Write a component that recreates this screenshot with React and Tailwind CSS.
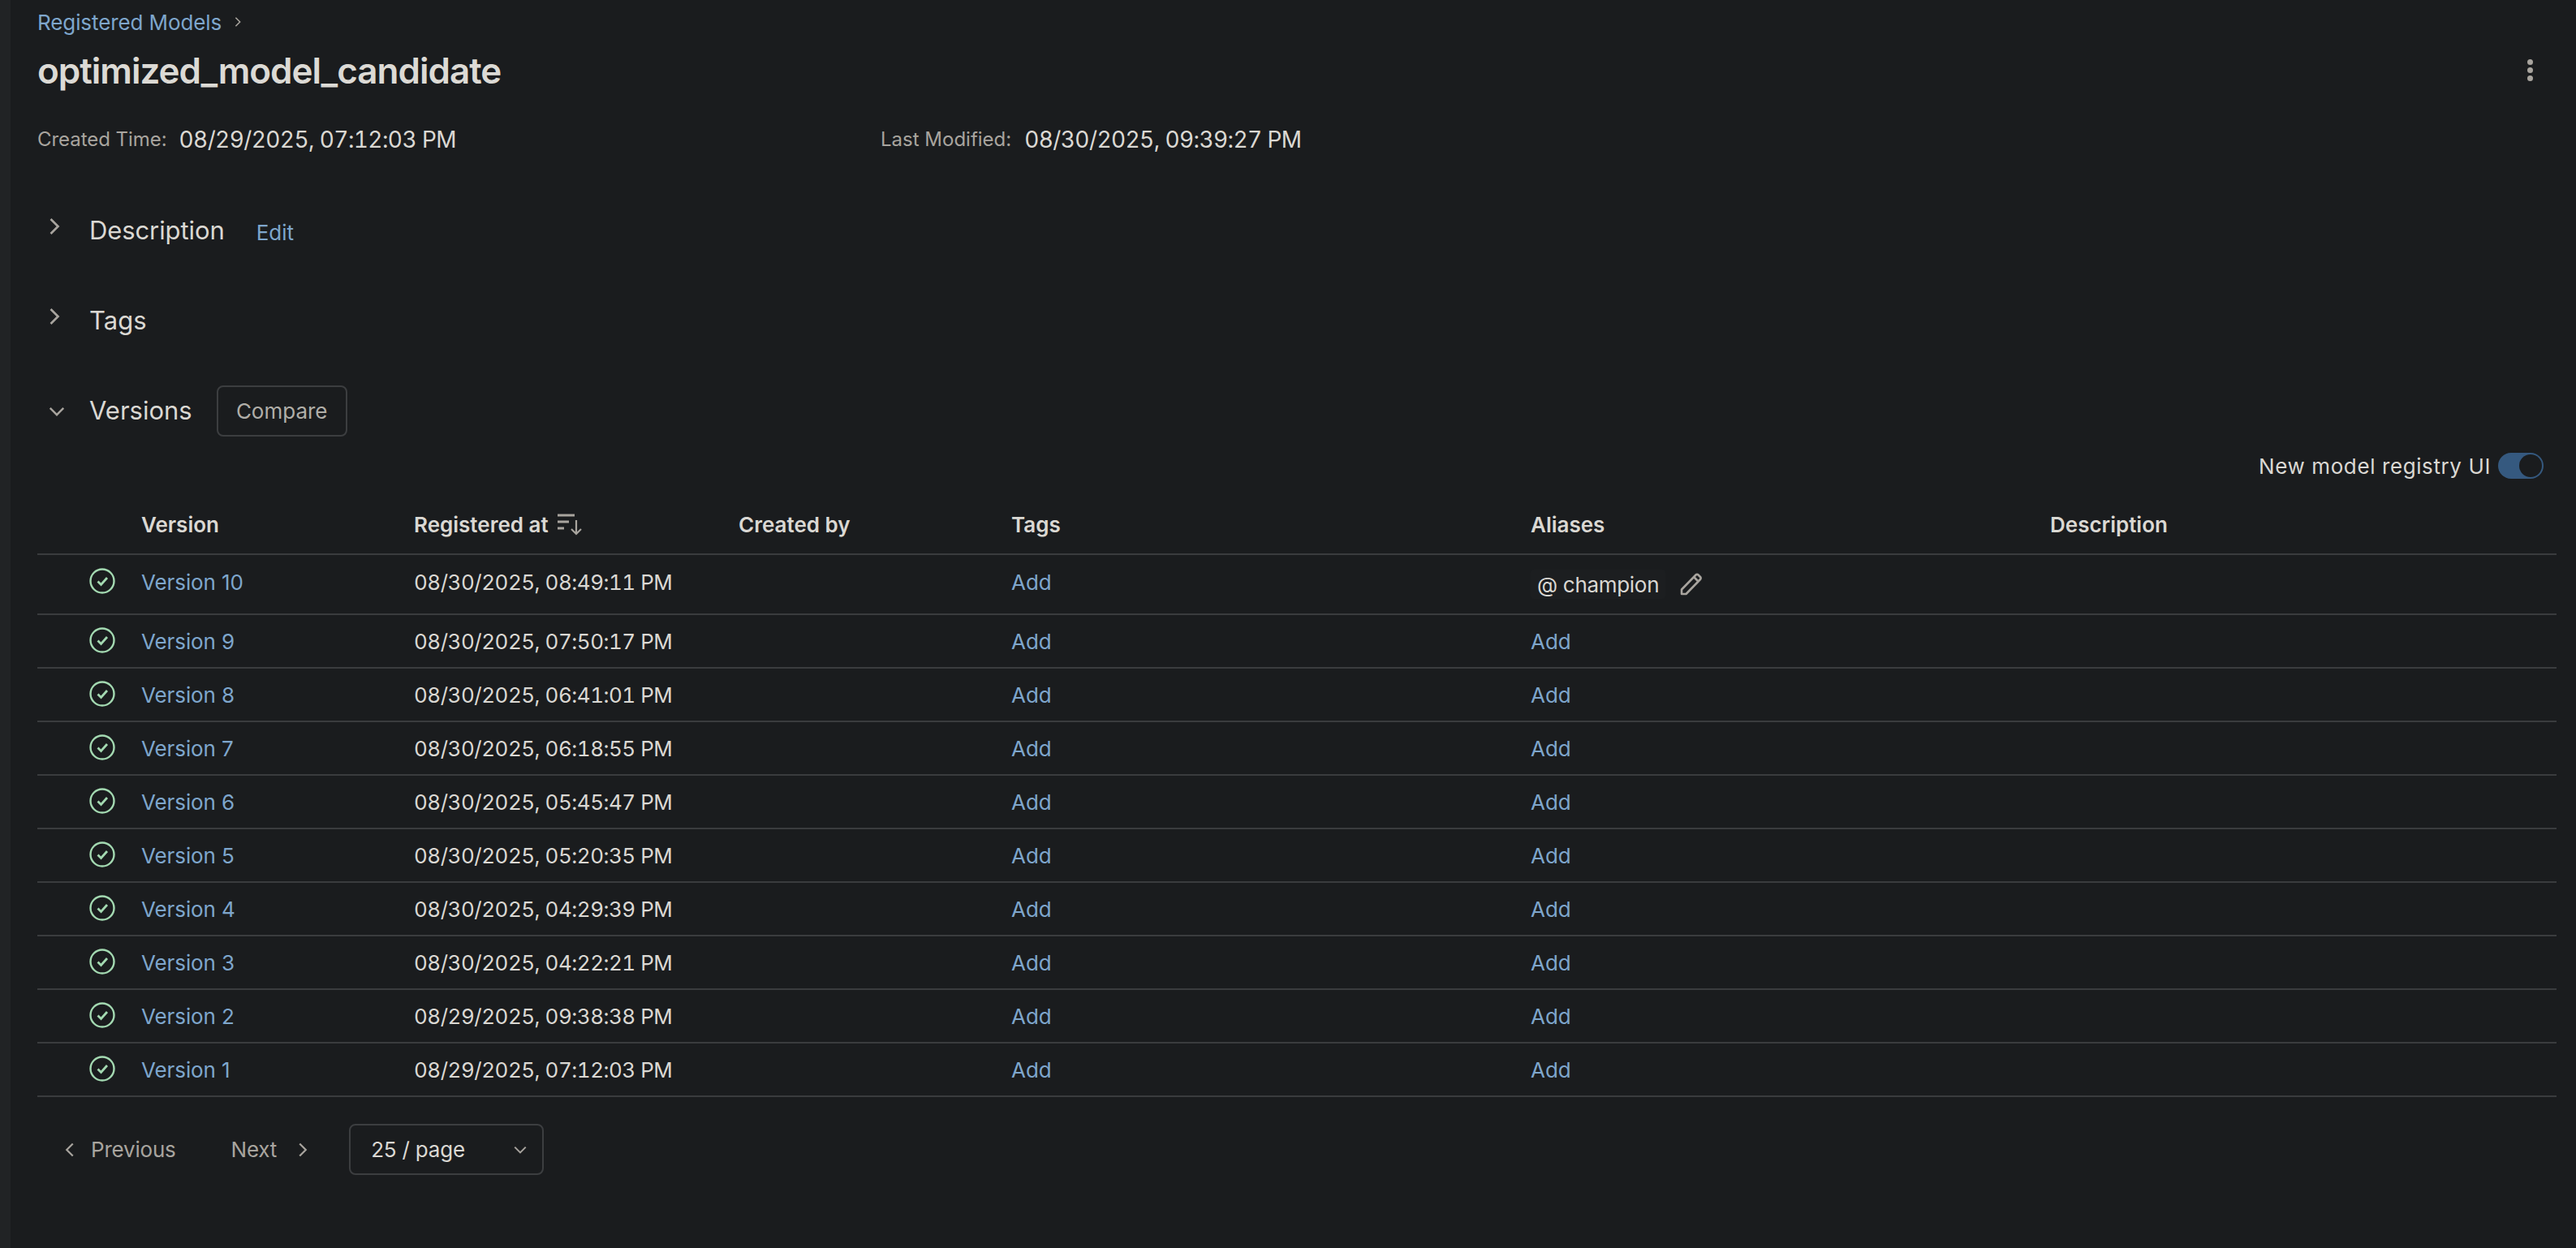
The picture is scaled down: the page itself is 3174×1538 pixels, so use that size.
import React from 'react'

const versions = [
  { name: 'Version 10', at: '08/30/2025, 08:49:11 PM', alias: 'champion' },
  { name: 'Version 9', at: '08/30/2025, 07:50:17 PM' },
  { name: 'Version 8', at: '08/30/2025, 06:41:01 PM' },
  { name: 'Version 7', at: '08/30/2025, 06:18:55 PM' },
  { name: 'Version 6', at: '08/30/2025, 05:45:47 PM' },
  { name: 'Version 5', at: '08/30/2025, 05:20:35 PM' },
  { name: 'Version 4', at: '08/30/2025, 04:29:39 PM' },
  { name: 'Version 3', at: '08/30/2025, 04:22:21 PM' },
  { name: 'Version 2', at: '08/29/2025, 09:38:38 PM' },
  { name: 'Version 1', at: '08/29/2025, 07:12:03 PM' },
]

const cols = 'grid grid-cols-[128px_336px_400px_336px_640px_640px_1fr]'

function Chevron({ dir = 'right', className = '' }) {
  const d = {
    right: 'M5 2l6 6-6 6',
    left: 'M11 2L5 8l6 6',
    down: 'M2 5l6 6 6-6',
  }[dir]
  return (
    <svg viewBox="0 0 16 16" fill="none" stroke="currentColor" strokeWidth="1.8" className={className}>
      <path d={d} />
    </svg>
  )
}

function StatusIcon() {
  return (
    <svg viewBox="0 0 32 32" fill="none" stroke="#a3d9b1" strokeWidth="2.4" className="w-[32px] h-[32px] shrink-0">
      <circle cx="16" cy="16" r="14.5" />
      <path d="M10.5 16.5l4 4 7.5-8.500" strokeWidth="2.8" />
    </svg>
  )
}

function SortIcon() {
  return (
    <svg viewBox="0 0 32 28" fill="none" stroke="#a8a49e" strokeWidth="3" className="w-[32px] h-[28px]">
      <path d="M1 3h21M1 11h14M1 19h8" />
      <path d="M24 9v17M18 20l6 6 6-6" strokeWidth="2.2" />
    </svg>
  )
}

function PencilIcon() {
  return (
    <svg viewBox="0 0 30 30" fill="none" stroke="#a8a49e" strokeWidth="2.6" strokeLinejoin="round" className="w-[30px] h-[30px]">
      <path d="M3 27v-5.500L20.500 3.500a2.100 2.100 0 0 1 3 0l2.500 2.500a2.100 2.100 0 0 1 0 3L8.500 27z" />
      <path d="M18 6l6 6" />
    </svg>
  )
}

export default function App() {
  return (
    <div className="flex min-h-screen h-[1538px] overflow-hidden bg-[#1a1c1e] text-[26px] text-[#dad8d3] font-['Inter','Liberation_Sans',sans-serif]">
      <div className="w-[13px] shrink-0 bg-[#212325]" />

      <main className="flex-1 min-w-0 pl-[33px] pr-[24px]">
        <div className="h-[54px] flex items-center text-[#7ea6cc] tracking-[-0.1px]">
          Registered Models
          <Chevron className="w-[14px] h-[14px] ml-[13px] text-[#a8a49e]" />
        </div>

        <div className="h-[66px] flex items-center justify-between">
          <h1 className="text-[44px] font-semibold tracking-[-1px] text-[#dcdad5]">optimized_model_candidate</h1>
          <div className="flex flex-col gap-[3px] mr-[29px] -mt-[2px]">
            <span className="w-[7px] h-[7px] rounded-full bg-[#a8a49e]" />
            <span className="w-[7px] h-[7px] rounded-full bg-[#a8a49e]" />
            <span className="w-[7px] h-[7px] rounded-full bg-[#a8a49e]" />
          </div>
        </div>

        <div className="mt-[20px] h-[64px] grid grid-cols-[1039px_1fr] items-center">
          <div className="flex items-center">
            <span className="text-[24px] text-[#a8a49e] mr-[15px] tracking-[-0.05px]">Created Time:</span>
            <span className="text-[28px] tabular-nums tracking-[-0.6px]">08/29/2025, 07:12:03 PM</span>
          </div>
          <div className="flex items-center">
            <span className="text-[24px] text-[#a8a49e] mr-[16px]">Last Modified:</span>
            <span className="text-[28px] tabular-nums tracking-[-0.6px]">08/30/2025, 09:39:27 PM</span>
          </div>
        </div>

        <div className="mt-[48px] h-[64px] flex items-center">
          <Chevron className="w-[24px] h-[24px] ml-[9px] -mt-[10px] text-[#a8a49e]" />
          <span className="ml-[31px] text-[31px] tracking-[-0.1px]">Description</span>
          <span className="ml-[39px] mt-[4px] text-[#7ea6cc]">Edit</span>
        </div>

        <div className="mt-[47px] h-[64px] flex items-center">
          <Chevron className="w-[24px] h-[24px] ml-[9px] -mt-[10px] text-[#a8a49e]" />
          <span className="ml-[31px] text-[31px]">Tags</span>
        </div>

        <div className="mt-[48px] h-[63px] flex items-center">
          <Chevron dir="down" className="w-[22px] h-[22px] ml-[13px] text-[#a8a49e]" />
          <span className="ml-[29px] text-[31px]">Versions</span>
          <button className="ml-[30px] h-[63px] w-[161px] rounded-[8px] border-2 border-[#3c3e40] text-[#b0aea8]">Compare</button>
        </div>

        <div className="mt-[20px] h-[32px] flex items-center justify-end">
          <span className="text-[#dad8d3] mr-[9px] tracking-[0.6px]">New model registry UI</span>
          <div className="w-[56px] h-[32px] mr-[16px] rounded-full bg-[#35597f] flex items-center justify-end pr-[2px]">
            <span className="w-[28px] h-[28px] rounded-full bg-[#1a1c1e]" />
          </div>
        </div>

        <div className={`${cols} mt-[20px] h-[74px] items-center border-b-2 border-[#3a3c3e] font-semibold`}>
          <span />
          <span>Version</span>
          <span className="flex items-center gap-[10px]">Registered at <SortIcon /></span>
          <span>Created by</span>
          <span>Tags</span>
          <span>Aliases</span>
          <span>Description</span>
        </div>

        {versions.map((v, i) => (
          <div key={v.name} className={`${cols} ${i === 0 ? 'h-[74px] pb-[6px]' : 'h-[66px]'} items-center border-b-2 border-[#3a3c3e]`}>
            <span className="pl-[64px] -mt-[2px]"><StatusIcon /></span>
            <span className="text-[#7ea6cc] tracking-[-0.1px]">{v.name}</span>
            <span className="tabular-nums tracking-[-0.5px]">{v.at}</span>
            <span />
            <span className="text-[#7ea6cc]">Add</span>
            {v.alias ? (
              <span className="flex items-center mt-[6px]">
                <span className="h-[36px] px-[8px] flex items-center rounded-[4px] bg-[#1c1e20] tracking-[-0.3px]">@ {v.alias}</span>
                <span className="ml-[17px]"><PencilIcon /></span>
              </span>
            ) : (
              <span className="text-[#7ea6cc]">Add</span>
            )}
            <span />
          </div>
        ))}

        <div className="mt-[33px] flex items-center">
          <Chevron dir="left" className="w-[20px] h-[20px] ml-[30px] text-[#a8a49e]" />
          <span className="ml-[16px] text-[#a8a49e] tracking-[-0.2px]">Previous</span>
          <span className="ml-[68px] text-[#a8a49e] tracking-[-0.2px]">Next</span>
          <Chevron className="w-[20px] h-[20px] ml-[22px] text-[#a8a49e]" />
          <div className="ml-[47px] w-[240px] h-[63px] rounded-[8px] border-2 border-[#3c3e40] flex items-center justify-between pl-[25px] pr-[18px]">
            <span className="tracking-[-0.2px]">25 / page</span>
            <Chevron dir="down" className="w-[18px] h-[18px] text-[#a8a49e]" />
          </div>
        </div>
      </main>
    </div>
  )
}
